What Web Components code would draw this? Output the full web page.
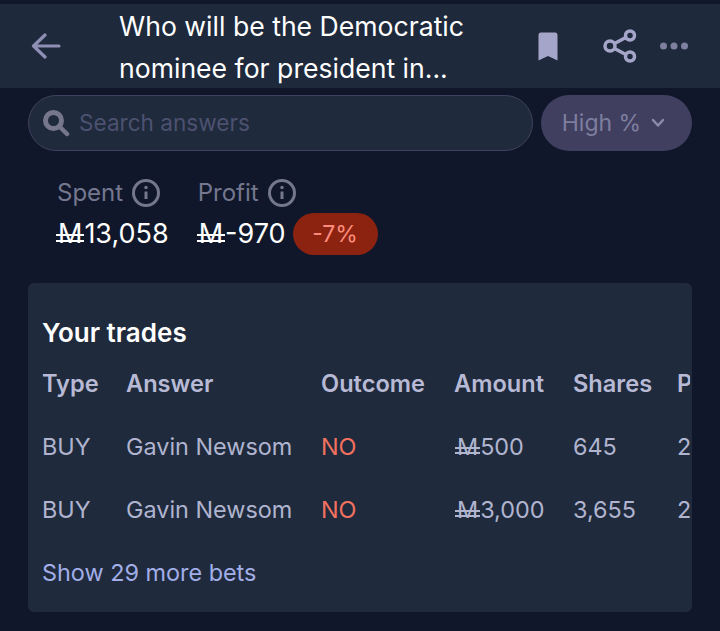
<!DOCTYPE html>
<html lang="en"><head><meta charset="utf-8"><title>Trades</title>
<style>
html,body{margin:0;padding:0;background:#10172a;}
body{width:720px;height:631px;overflow:hidden;font-family:Inter,"Noto Sans",sans-serif;}
</style></head><body>
<market-header></market-header>
<answer-search></answer-search>
<market-stats></market-stats>
<trades-card></trades-card>
<script>
function def(name, html){
  customElements.define(name, class extends HTMLElement{
    constructor(){super();this.attachShadow({mode:'open'}).innerHTML=html;}
  });
}
def('mana-amount',`<style>
:host{display:inline-flex;align-items:baseline;white-space:nowrap}
.m{position:relative;display:inline-block;line-height:1.2;margin-left:var(--m-left,3px);margin-right:var(--m-gap,2px)}
.m::before,.m::after{content:"";position:absolute;left:-2px;right:-2px;height:var(--m-line,1.5px);background:currentColor}
.m::before{top:.6em}.m::after{top:.82em}
</style><span class="m">M</span><slot></slot>`);
def('market-header',`<style>
:host{display:flex;align-items:center;box-sizing:border-box;height:84px;margin-top:4px;background:#1e293b;color:#fff}
.back{width:119px;flex:none;display:flex;padding-left:31px;box-sizing:border-box}
h1{margin:0;width:370px;flex:none;font:400 26.600px/42px Inter,sans-serif;position:relative;top:1px}
.acts{margin-left:49px;display:flex;align-items:center}
.share{margin-left:45px}.dots{margin-left:23px}
svg{display:block}
</style>
<span class="back"><svg width="30" height="26" viewBox="0 0 30 26" fill="none" stroke="#8f8eb5" stroke-width="3.200" stroke-linecap="round" stroke-linejoin="round"><path d="M28 13H3M14 2 2.500 13 14 24"/></svg></span>
<h1>Who will be the Democratic nominee for president in...</h1>
<span class="acts">
<svg width="20" height="29" viewBox="0 0 20 29"><path d="M3 0.500H17Q19.500 .500 19.500 3V28.500L10 24 .5 28.500V3Q.5 .5 3 .5Z" fill="#a5a5c9"/></svg>
<svg class="share" width="34" height="34" viewBox="0 0 34 34" fill="none" stroke="#a5a5c9" stroke-width="3.500"><circle cx="27" cy="6.500" r="4.500"/><circle cx="7" cy="17" r="5"/><circle cx="27" cy="27.500" r="4.500"/><path d="M11.500 14.500 22.800 8.500M11.500 19.500 22.800 25.500"/></svg>
<svg class="dots" width="28" height="8" viewBox="0 0 28 8" fill="#7f7f9f"><circle cx="3.500" cy="4" r="3.500"/><circle cx="14" cy="4" r="3.500"/><circle cx="24.500" cy="4" r="3.500"/></svg>
</span>`);
def('answer-search',`<style>
:host{display:flex;gap:8px;margin:7px 28px 0;height:56px;font:400 22.600px/1 Inter,sans-serif}
.in{flex:1;box-sizing:border-box;border:1px solid #40415f;border-radius:28px;background:#1f2a3c;display:flex;align-items:center;padding-left:13px;color:#4d5170}
.in svg{margin-right:9px;flex:none}
.btn{width:151px;box-sizing:border-box;padding-right:6px;border-radius:28px;background:#403f60;color:#7e7e9e;display:flex;align-items:center;justify-content:center;gap:10px;flex:none;font-size:23px}
</style>
<div class="in"><svg width="28" height="28" viewBox="0 0 28 28" fill="none" stroke="#76768f" stroke-width="5"><circle cx="11.500" cy="11.500" r="8"/><path d="M17.500 17.500 25 25" stroke-linecap="round" stroke-width="4.500"/></svg><span>Search answers</span></div>
<div class="btn"><span>High %</span><svg width="14" height="10" viewBox="0 0 14 10" fill="none" stroke="#8b8ba9" stroke-width="2.500" stroke-linecap="round" stroke-linejoin="round"><path d="M2 2 7 7.500 12 2"/></svg></div>`);
def('stat-block',`<style>
:host{display:flex;flex-direction:column;gap:2px}
.l{display:flex;align-items:center;gap:8px;color:#75778f;font:400 24px/36px Inter,sans-serif}
.v{display:flex;align-items:center;color:#fff;font:400 27px/42px Inter,sans-serif;--m-line:2px;--m-left:1px}
svg{flex:none}
</style>
<div class="l"><slot name="label"></slot><svg width="30" height="30" viewBox="0 0 30 30" fill="none" stroke="#75778f"><circle cx="15" cy="15" r="12.500" stroke-width="3"/><path d="M15 13.500V21" stroke-width="3"/><circle cx="15" cy="9.500" r="1" stroke-width="1.500" fill="#75778f"/></svg></div>
<div class="v"><slot></slot></div>`);
def('market-stats',`<style>
:host{display:flex;gap:29px;margin:24px 0 0 57px;height:108px}
.pill{display:inline-flex;align-items:center;justify-content:center;margin-left:7px;width:85px;height:42px;border-radius:21px;background:#8c2311;color:#fd8c7b;font-size:23px}
</style>
<stat-block><span slot="label">Spent</span><mana-amount>13,058</mana-amount></stat-block>
<stat-block><span slot="label">Profit</span><mana-amount>-970</mana-amount><span class="pill">-7%</span></stat-block>`);
def('trades-card',`<style>
:host{display:block;box-sizing:border-box;margin:0 28px;height:329px;padding:27px 2px 0 14px;background:#1f2a3c;border-radius:6px;color:#b0b4cf;font:400 23.400px/63px Inter,sans-serif}
h2{margin:0;color:#fff;font:600 26px/46px Inter,sans-serif}
.wrap{overflow:hidden}
.g{display:grid;grid-template-columns:84px 195px 133px 119px 104px 80px;width:715px}
.h{font-weight:600;font-size:23.600px;color:#b8bad5;line-height:56px;padding-bottom:3px}
.no{color:#f2715f}
a{display:block;color:#a2aee8;line-height:63px}
</style>
<h2>Your trades</h2>
<div class="wrap"><div class="g">
<span class="h">Type</span><span class="h">Answer</span><span class="h">Outcome</span><span class="h">Amount</span><span class="h">Shares</span><span class="h">Price</span>
<span>BUY</span><span>Gavin Newsom</span><span class="no">NO</span><span><mana-amount>500</mana-amount></span><span>645</span><span>26¢</span>
<span>BUY</span><span>Gavin Newsom</span><span class="no">NO</span><span><mana-amount>3,000</mana-amount></span><span>3,655</span><span>27¢</span>
</div></div>
<a>Show 29 more bets</a>`);
</script>
</body></html>
